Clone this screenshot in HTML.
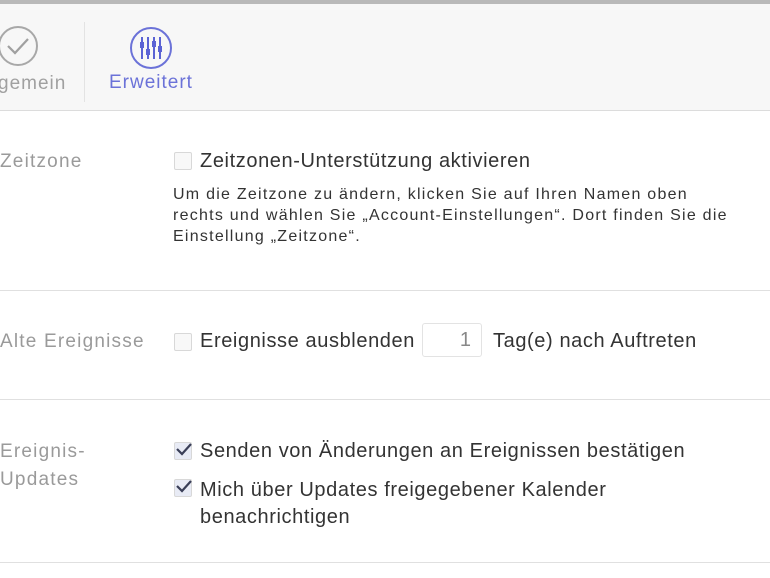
<!DOCTYPE html>
<html><head><meta charset="utf-8"><style>
body{margin:0;width:770px;height:578px;overflow:hidden;background:#fff;font-family:"Liberation Sans",sans-serif;position:relative}
.top{position:absolute;left:0;top:0;width:770px;height:4px;background:#b9b9b9}
.hdr{position:absolute;left:0;top:4px;width:770px;height:106px;background:#f7f7f7;border-bottom:1px solid #dcdcdc}
.sep{position:absolute;left:84px;top:18px;width:1px;height:80px;background:#e3e3e3}
.t{position:absolute;font-size:19px;letter-spacing:1px}
.lbl{position:absolute;left:0;font-size:19px;letter-spacing:1.2px;color:#9a9a9a}
.txt{position:absolute;font-size:20px;letter-spacing:0.6px;color:#333;white-space:nowrap}
.small{position:absolute;left:173px;top:184px;font-size:16px;letter-spacing:1.25px;line-height:21px;color:#333;width:600px}
.hr{position:absolute;left:0;width:770px;height:1px;background:#e0e0e0}
.cb{position:absolute;width:16px;height:16px;border:1px solid #d8d8d8;border-radius:2px;background:#f8f8f8}
.cb.on{background:#e8ebf5}
.inp{position:absolute;left:422px;top:323px;width:60px;height:34px;border:1px solid #e3e3e3;border-radius:3px;box-sizing:border-box;text-align:right;padding-right:10px;line-height:32px;font-size:20px;color:#888}
</style></head><body>
<div class="top"></div>
<div class="hdr">
<svg style="position:absolute;left:-4px;top:20px" width="44" height="44" viewBox="0 0 44 44"><circle cx="22" cy="22" r="19" fill="none" stroke="#a8a8a8" stroke-width="2"/><path d="M12 22 L19 29 L32 15" fill="none" stroke="#a0a0a0" stroke-width="2.2"/></svg>
<div class="t" style="left:-2px;top:69px;color:#a0a0a0">gemein</div>
<div class="sep"></div>
<svg style="position:absolute;left:129px;top:22px" width="44" height="44" viewBox="0 0 44 44"><circle cx="22" cy="22" r="20" fill="none" stroke="#6b72d8" stroke-width="2"/>
<g stroke="#5a62d4" stroke-width="2"><line x1="13" y1="11" x2="13" y2="33"/><line x1="19" y1="11" x2="19" y2="33"/><line x1="25" y1="11" x2="25" y2="33"/><line x1="31" y1="11" x2="31" y2="33"/></g>
<g fill="#5a62d4"><rect x="11" y="16" width="4" height="6"/><rect x="17" y="23" width="4" height="6"/><rect x="23" y="15" width="4" height="6"/><rect x="29" y="20" width="4" height="6"/></g></svg>
<div class="t" style="left:109px;top:68px;color:#6b72d8">Erweitert</div>
</div>
<div class="lbl" style="top:151px">Zeitzone</div>
<div class="cb" style="left:174px;top:152px"></div>
<div class="txt" style="left:200px;top:150px">Zeitzonen-Unterstützung aktivieren</div>
<div class="small">Um die Zeitzone zu ändern, klicken Sie auf Ihren Namen oben<br>rechts und wählen Sie „Account-Einstellungen“. Dort finden Sie die<br>Einstellung „Zeitzone“.</div>
<div class="hr" style="top:290px"></div>
<div class="lbl" style="top:331px">Alte Ereignisse</div>
<div class="cb" style="left:174px;top:333px"></div>
<div class="txt" style="left:200px;top:330px">Ereignisse ausblenden</div>
<div class="inp">1</div>
<div class="txt" style="left:493px;top:330px">Tag(e) nach Auftreten</div>
<div class="hr" style="top:399px"></div>
<div class="lbl" style="top:438px;line-height:28px">Ereignis-<br>Updates</div>
<div class="cb on" style="left:174px;top:442px"></div>
<svg style="position:absolute;left:175px;top:441px" width="18" height="16"><path d="M2 8 L7 13 L16 3" fill="none" stroke="#3a3f58" stroke-width="2.2"/></svg>
<div class="txt" style="left:200px;top:440px">Senden von Änderungen an Ereignissen bestätigen</div>
<div class="cb on" style="left:174px;top:479px"></div>
<svg style="position:absolute;left:175px;top:478px" width="18" height="16"><path d="M2 8 L7 13 L16 3" fill="none" stroke="#3a3f58" stroke-width="2.2"/></svg>
<div class="txt" style="left:200px;top:477px;line-height:27px">Mich über Updates freigegebener Kalender<br>benachrichtigen</div>
<div class="hr" style="top:562px"></div>
</body></html>
